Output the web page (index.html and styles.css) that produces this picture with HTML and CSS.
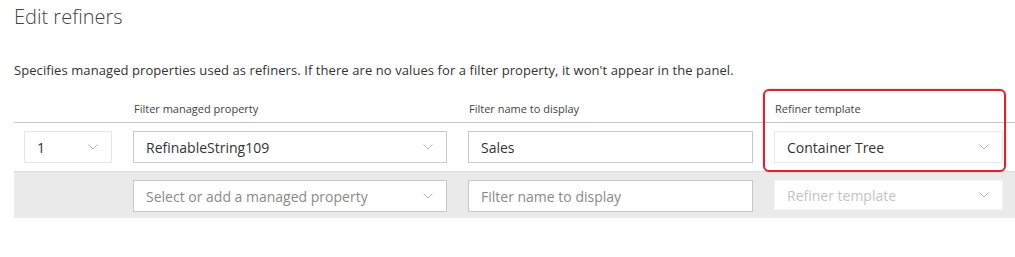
FILE: index.html
```html
<!DOCTYPE html>
<html lang="en">
  <head>
    <meta charset="UTF-8" />
    <meta name="viewport" content="width=device-width, initial-scale=1.0" />
    <title>Edit refiners</title>
    <link rel="stylesheet" href="styles.css">
  </head>
  <body>
    <div class="panel">
      <h1 class="title">Edit refiners</h1>
      <p class="desc">Specifies managed properties used as refiners. If there are no values for a filter property, it won't appear in the panel.</p>

      <div class="refiners">
        <div class="row head">
          <span></span>
          <span class="label">Filter managed property</span>
          <span class="label">Filter name to display</span>
          <span class="label">Refiner template</span>
        </div>

        <div class="row">
          <div class="field select index">
            <span class="value">1</span>
            <svg class="chev" width="10" height="6" viewBox="0 0 10 6"><polyline points="0.5,0.5 5,5 9.5,0.5" /></svg>
          </div>
          <div class="field select">
            <span class="value">RefinableString109</span>
            <svg class="chev" width="10" height="6" viewBox="0 0 10 6"><polyline points="0.5,0.5 5,5 9.5,0.5" /></svg>
          </div>
          <div class="field">
            <span class="value">Sales</span>
          </div>
          <div class="field select soft">
            <span class="value">Container Tree</span>
            <svg class="chev" width="10" height="6" viewBox="0 0 10 6"><polyline points="0.5,0.5 5,5 9.5,0.5" /></svg>
          </div>
        </div>

        <div class="row new">
          <span></span>
          <div class="field select">
            <span class="placeholder">Select or add a managed property</span>
            <svg class="chev" width="10" height="6" viewBox="0 0 10 6"><polyline points="0.5,0.5 5,5 9.5,0.5" /></svg>
          </div>
          <div class="field">
            <span class="placeholder">Filter name to display</span>
          </div>
          <div class="field select disabled">
            <span class="placeholder">Refiner template</span>
            <svg class="chev" width="10" height="6" viewBox="0 0 10 6"><polyline points="0.5,0.5 5,5 9.5,0.5" /></svg>
          </div>
        </div>
      </div>

      <!-- annotation drawn over the template column -->
      <div class="highlight"></div>
    </div>
  </body>
</html>
```

FILE: styles.css
```css
body {
  margin: 0;
  background: #fff;
  font-family: "Open Sans", "Liberation Sans", sans-serif;
  color: #333;
  overflow: hidden;
}
.panel {
  position: relative;
  padding: 4px 0 0 14px;
}
.title {
  margin: 0;
  font-size: 20px;
  font-weight: 300;
  line-height: 26px;
  color: #444;
}
.desc {
  margin: 32px 0 0;
  font-size: 13px;
  line-height: 17px;
  letter-spacing: 0.08px;
  color: #333;
}
.refiners {
  margin-top: 10px;
}
.row {
  display: grid;
  grid-template-columns: 88px 314px 285px 229px;
  column-gap: 21px;
  padding: 8px 0 8px 10px;
  align-items: center;
}
.row.head {
  padding: 12px 0 6px 10px;
  border-bottom: 1px solid #c6c6c6;
}
.row.new {
  background: #eaeaea;
  border-top: 1px solid #dcdcdc;
  padding-bottom: 6px;
}
.label {
  font-size: 11px;
  line-height: 15px;
  color: #444;
  padding-left: 1px;
}
.field {
  display: flex;
  align-items: center;
  justify-content: space-between;
  height: 32px;
  box-sizing: border-box;
  padding: 0 12px;
  background: #fff;
  border: 1px solid #c8c8c8;
  font-size: 14px;
}
.field.index {
  border-color: #e6e6e6;
}
.field.soft {
  border-color: #e8e8e8;
}
.field.disabled {
  border-color: #f4f4f4;
  height: 30px;
  margin-bottom: 2px;
}
.value {
  color: #333;
}
.placeholder {
  color: #8a8a8a;
}
.disabled .placeholder {
  color: #c4c4c4;
}
.chev {
  fill: none;
  stroke: #b4b4b4;
  stroke-width: 1;
  margin-right: 1px;
}
.highlight {
  position: absolute;
  left: 763px;
  top: 89px;
  width: 243px;
  height: 83px;
  box-sizing: border-box;
  border: 2px solid #d4262f;
  border-radius: 6px;
  box-shadow: 0 0 2px rgba(212, 38, 47, 0.4);
}
```
